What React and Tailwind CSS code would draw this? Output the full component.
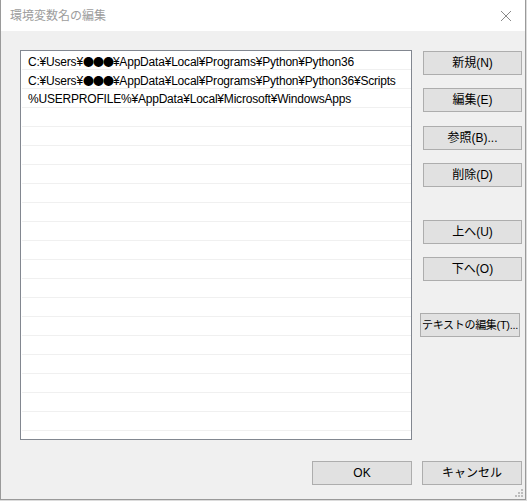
import React from "react";

const Dots = () => (
  <span style={{ fontFamily: '"Noto Sans CJK JP", sans-serif' }} className="text-[11px] tracking-[-1px]">
    ●●●
  </span>
);

const paths = [
  <>C:¥Users¥<Dots />¥AppData¥Local¥Programs¥Python¥Python36</>,
  <>C:¥Users¥<Dots />¥AppData¥Local¥Programs¥Python¥Python36¥Scripts</>,
  <>%USERPROFILE%¥AppData¥Local¥Microsoft¥WindowsApps</>,
];

const font = { fontFamily: '"Liberation Sans", "Noto Sans CJK JP", sans-serif' };

const Btn = ({ children, className = "", size = "text-[12px]" }) => (
  <button
    className={`h-[24px] border border-[#adadad] bg-[#e1e1e1] ${size} text-black leading-none whitespace-nowrap flex items-center justify-center ${className}`}
  >
    {children}
  </button>
);

const App = () => {
  const rows = Array.from({ length: 21 }, (_, i) => paths[i] || "");

  return (
    <div className="w-[527px] h-[501px] bg-[#dcdcdc] overflow-hidden" style={font}>
      <div className="relative w-[526px] h-[500px] bg-[#f0f0f0] border-x border-b border-[#9a9a9a] flex flex-col">
        {/* title bar */}
        <div className="h-[31px] bg-white flex items-center justify-between pl-[9px] pr-[10px] shrink-0">
          <span className="text-[12px] text-[#9d9d9d]">環境変数名の編集</span>
          <svg width="12" height="12" viewBox="0 0 12 12" className="mr-[3px]">
            <path d="M1 1L11 11M11 1L1 11" stroke="#8a8a8a" strokeWidth="1" />
          </svg>
        </div>

        {/* body */}
        <div className="flex pl-[19px] pt-[19px]">
          <div className="w-[392px] h-[390px] bg-white border border-[#828790] overflow-hidden">
            {rows.map((r, i) => (
              <div
                key={i}
                className="h-[19px] ml-[1px] border-b border-[#f0f0f0] pl-[6px] pt-[2px] text-[12px] leading-[16px] tracking-[-0.2px] text-black whitespace-nowrap"
              >
                {r}
              </div>
            ))}
          </div>

          <div className="ml-[11px] flex flex-col w-[100px]">
            <Btn className="mt-[1px] w-[99px]">新規(N)</Btn>
            <Btn className="mt-[13px] w-[99px]">編集(E)</Btn>
            <Btn className="mt-[14px] w-[99px]">参照(B)...</Btn>
            <Btn className="mt-[13px] w-[99px]">削除(D)</Btn>
            <Btn className="mt-[33px] w-[99px]">上へ(U)</Btn>
            <Btn className="mt-[13px] w-[99px]">下へ(O)</Btn>
            <Btn className="mt-[32px] -ml-[3px] w-[100px] tracking-[-0.3px]" size="text-[11px]">
              テキストの編集(T)...
            </Btn>
          </div>
        </div>

        {/* footer */}
        <div className="flex justify-end gap-[10px] pr-[3px] mt-[21px]">
          <Btn className="w-[100px]">OK</Btn>
          <Btn className="w-[100px]">キャンセル</Btn>
        </div>

        {/* resize grip */}
        <svg width="10" height="10" viewBox="0 0 10 10" className="absolute right-[1px] bottom-[1px]">
          <rect x="7" y="1" width="2" height="2" fill="#bdbdbd" />
          <rect x="4" y="4" width="2" height="2" fill="#bdbdbd" />
          <rect x="7" y="4" width="2" height="2" fill="#bdbdbd" />
          <rect x="1" y="7" width="2" height="2" fill="#bdbdbd" />
          <rect x="4" y="7" width="2" height="2" fill="#bdbdbd" />
          <rect x="7" y="7" width="2" height="2" fill="#bdbdbd" />
        </svg>
      </div>
    </div>
  );
};

export default App;
